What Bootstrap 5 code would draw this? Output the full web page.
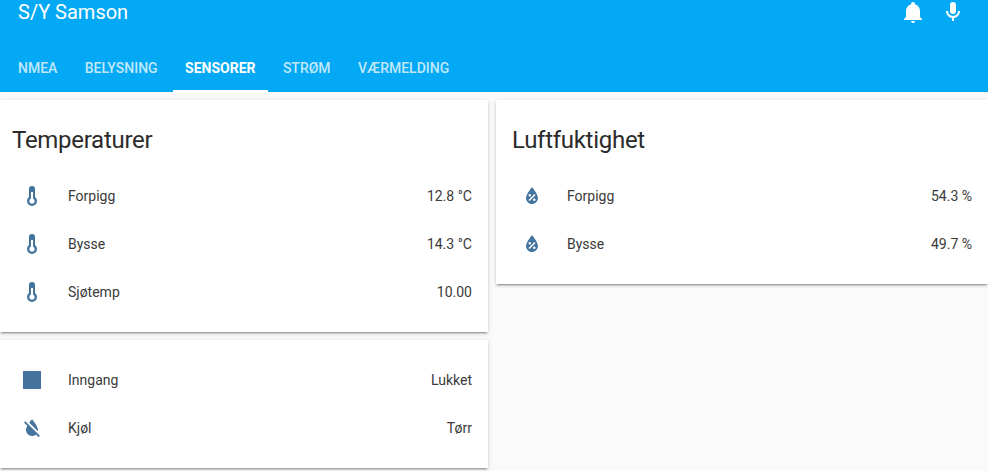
<!DOCTYPE html>
<html lang="en">
<head>
  <meta charset="UTF-8" />
  <meta name="viewport" content="width=device-width, initial-scale=1.0" />
  <title>S/Y Samson</title>
  <link rel="stylesheet" href="https://cdn.jsdelivr.net/npm/bootstrap@5.3.0/dist/css/bootstrap.min.css">
  <style>
    body { background: #fafafa; font-family: Roboto, "Liberation Sans", sans-serif; color: #3a3a3a; font-size: 14px; }
    .app-header { background: #03a9f4; height: 92px; color: #fff; }
    .app-toolbar { height: 44px; padding-left: 18px; }
    .app-title { font-size: 20px; line-height: 24px; }
    .app-actions { gap: 16px; padding-right: 23px; }
    .app-actions svg { width: 24px; height: 24px; fill: #fff; display: block; }
    .app-tabs { height: 48px; padding-left: 6px; gap: 3.4px; }
    .app-tabs .nav-link { height: 48px; padding: 16px 12px 0; font-size: 14px; line-height: 16px; font-weight: 500; color: rgba(255,255,255,.75); text-transform: uppercase; border-radius: 0; }
    .app-tabs .nav-link.active { color: #fff; font-weight: 700; border-bottom: 2px solid #fff; }
    .app-board { gap: 8px; padding-top: 8px; padding-bottom: 3px; }
    .board-left { width: 488px; gap: 8px; }
    .board-right { width: 492px; }
    .panel { border: 0; border-radius: 0; background: #fff; box-shadow: 0 2px 2px rgba(0,0,0,.14), 0 1px 5px rgba(0,0,0,.12), 0 3px 1px -2px rgba(0,0,0,.2); padding: 0 16px 16px 12px; }
    .board-right .panel { padding-left: 16px; }
    .panel-title { font-size: 24px; line-height: 32px; padding-top: 24px; margin-bottom: 16px; font-weight: 400; letter-spacing: -.28px; color: #2b2b2b; }
    .panel-plain { padding-top: 16px; padding-bottom: 16px; }
    .sensor-row { height: 48px; }
    .sensor-row svg { width: 24px; height: 24px; fill: #44739e; margin-left: 8px; margin-right: 24px; flex: none; }
    .board-right .sensor-row svg { margin-right: 23px; }
  </style>
</head>
<body>
  <header class="app-header">
    <div class="app-toolbar d-flex justify-content-between">
      <div class="app-title">S/Y Samson</div>
      <div class="app-actions d-flex">
        <svg viewBox="0 0 24 24"><path d="M21,19V20H3V19L5,17V11C5,7.9 7.03,5.17 10,4.29C10,4.19 10,4.1 10,4A2,2 0 0,1 12,2A2,2 0 0,1 14,4C14,4.1 14,4.19 14,4.29C16.97,5.17 19,7.9 19,11V17L21,19M14,21A2,2 0 0,1 12,23A2,2 0 0,1 10,21"/></svg>
        <svg viewBox="0 0 24 24"><path d="M12,2A3,3 0 0,1 15,5V11A3,3 0 0,1 12,14A3,3 0 0,1 9,11V5A3,3 0 0,1 12,2M19,11C19,14.53 16.39,17.44 13,17.93V21H11V17.93C7.61,17.44 5,14.53 5,11H7A5,5 0 0,0 12,16A5,5 0 0,0 17,11H19Z"/></svg>
      </div>
    </div>
    <nav class="app-tabs nav">
      <a class="nav-link" href="#">Nmea</a>
      <a class="nav-link" href="#">Belysning</a>
      <a class="nav-link active" href="#">Sensorer</a>
      <a class="nav-link" href="#">Strøm</a>
      <a class="nav-link" href="#">Værmelding</a>
    </nav>
  </header>

  <main class="app-board d-flex align-items-start">
    <div class="board-left d-flex flex-column">
      <section class="panel card">
        <h2 class="panel-title">Temperaturer</h2>
        <div class="sensor-row d-flex align-items-center">
          <svg viewBox="0 0 24 24"><path fill-rule="evenodd" d="M17,17A5,5 0 0,1 12,22A5,5 0 0,1 7,17C7,15.36 7.79,13.91 9,13V5A3,3 0 0,1 12,2A3,3 0 0,1 15,5V13C16.21,13.91 17,15.36 17,17M11,8V14.6C10,15 9.4,15.9 9.4,17A2.6,2.6 0 0,0 12,19.6A2.6,2.6 0 0,0 14.6,17C14.6,15.9 14,15 13,14.6V8H11Z"/></svg>
          <span class="flex-grow-1">Forpigg</span><span>12.8 °C</span>
        </div>
        <div class="sensor-row d-flex align-items-center">
          <svg viewBox="0 0 24 24"><path fill-rule="evenodd" d="M17,17A5,5 0 0,1 12,22A5,5 0 0,1 7,17C7,15.36 7.79,13.91 9,13V5A3,3 0 0,1 12,2A3,3 0 0,1 15,5V13C16.21,13.91 17,15.36 17,17M11,8V14.6C10,15 9.4,15.9 9.4,17A2.6,2.6 0 0,0 12,19.6A2.6,2.6 0 0,0 14.6,17C14.6,15.9 14,15 13,14.6V8H11Z"/></svg>
          <span class="flex-grow-1">Bysse</span><span>14.3 °C</span>
        </div>
        <div class="sensor-row d-flex align-items-center">
          <svg viewBox="0 0 24 24"><path fill-rule="evenodd" d="M17,17A5,5 0 0,1 12,22A5,5 0 0,1 7,17C7,15.36 7.79,13.91 9,13V5A3,3 0 0,1 12,2A3,3 0 0,1 15,5V13C16.21,13.91 17,15.36 17,17M11,8V14.6C10,15 9.4,15.9 9.4,17A2.6,2.6 0 0,0 12,19.6A2.6,2.6 0 0,0 14.6,17C14.6,15.9 14,15 13,14.6V8H11Z"/></svg>
          <span class="flex-grow-1">Sjøtemp</span><span>10.00</span>
        </div>
      </section>
      <section class="panel panel-plain card">
        <div class="sensor-row d-flex align-items-center">
          <svg viewBox="0 0 24 24"><path d="M3,3V21H21V3Z"/></svg>
          <span class="flex-grow-1">Inngang</span><span>Lukket</span>
        </div>
        <div class="sensor-row d-flex align-items-center">
          <svg viewBox="0 0 24 24"><path d="M17.12,17.12L12.5,12.5L5.27,5.27L4,6.55L7.32,9.87C6.55,11.32 6,12.79 6,14A6,6 0 0,0 12,20C13.5,20 14.9,19.43 15.96,18.5L18.59,21.13L19.86,19.86L17.12,17.12M18,14C18,10 12,3.2 12,3.2C12,3.2 10.67,4.71 9.27,6.72L17.86,15.31C17.95,14.89 18,14.45 18,14Z"/></svg>
          <span class="flex-grow-1">Kjøl</span><span>Tørr</span>
        </div>
      </section>
    </div>
    <div class="board-right">
      <section class="panel card">
        <h2 class="panel-title">Luftfuktighet</h2>
        <div class="sensor-row d-flex align-items-center">
          <svg viewBox="0 0 24 24"><path fill-rule="evenodd" d="M12,3.25C12,3.25 6,10 6,14C6,17.32 8.69,20 12,20A6,6 0 0,0 18,14C18,10 12,3.25 12,3.25M14.47,9.97L15.53,11.03L9.53,17.03L8.47,15.97M9.75,10A1.25,1.25 0 0,1 11,11.25A1.25,1.25 0 0,1 9.75,12.5A1.25,1.25 0 0,1 8.5,11.25A1.25,1.25 0 0,1 9.75,10M14.25,14.5A1.25,1.25 0 0,1 15.5,15.75A1.25,1.25 0 0,1 14.25,17A1.25,1.25 0 0,1 13,15.75A1.25,1.25 0 0,1 14.25,14.5Z"/></svg>
          <span class="flex-grow-1">Forpigg</span><span>54.3 %</span>
        </div>
        <div class="sensor-row d-flex align-items-center">
          <svg viewBox="0 0 24 24"><path fill-rule="evenodd" d="M12,3.25C12,3.25 6,10 6,14C6,17.32 8.69,20 12,20A6,6 0 0,0 18,14C18,10 12,3.25 12,3.25M14.47,9.97L15.53,11.03L9.53,17.03L8.47,15.97M9.75,10A1.25,1.25 0 0,1 11,11.25A1.25,1.25 0 0,1 9.75,12.5A1.25,1.25 0 0,1 8.5,11.25A1.25,1.25 0 0,1 9.75,10M14.25,14.5A1.25,1.25 0 0,1 15.5,15.75A1.25,1.25 0 0,1 14.25,17A1.25,1.25 0 0,1 13,15.75A1.25,1.25 0 0,1 14.25,14.5Z"/></svg>
          <span class="flex-grow-1">Bysse</span><span>49.7 %</span>
        </div>
      </section>
    </div>
  </main>
  <script src="https://cdn.jsdelivr.net/npm/bootstrap@5.3.0/dist/js/bootstrap.bundle.min.js"></script>
</body>
</html>
